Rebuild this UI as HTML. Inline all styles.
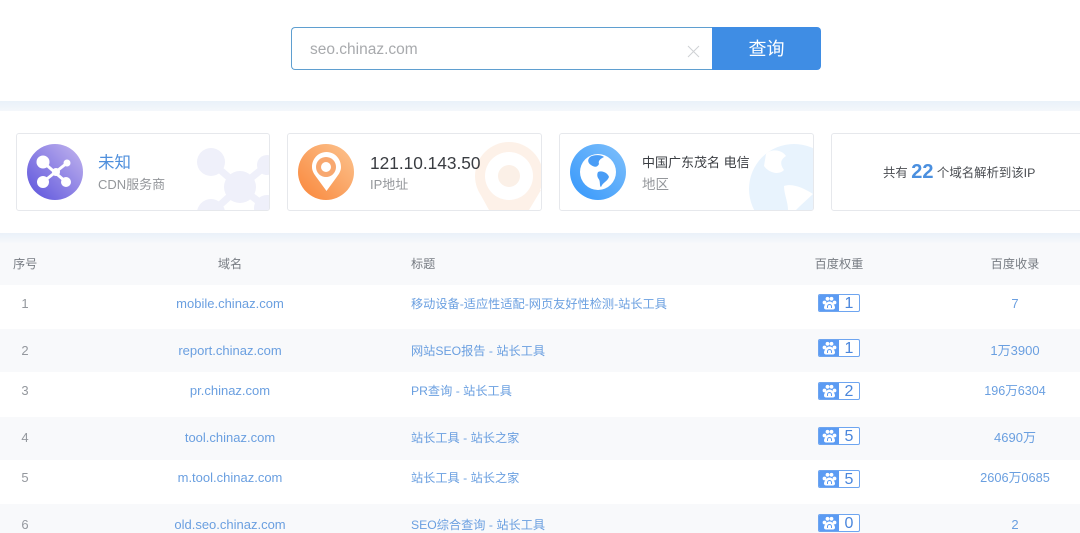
<!DOCTYPE html>
<html><head><meta charset="utf-8"><style>
html,body{margin:0;padding:0;width:1080px;height:533px;overflow:hidden;background:#fff;font-family:"Liberation Sans","Noto Sans CJK SC",sans-serif}
.a{position:absolute;white-space:nowrap}
#p{position:relative;width:1080px;height:533px;overflow:hidden}
.card{position:absolute;top:133px;height:76px;background:#fff;border:1px solid #e6e8ec;border-radius:3px;overflow:hidden}
.c{transform:translateX(-50%);font-size:13px;line-height:18px}
.l{color:#6a9fe0}.n{color:#94989e}.h{color:#777c83;font-size:12.2px}
.t{font-size:12.2px;line-height:18px;color:#6a9fe0}
.band{position:absolute;left:0;width:1080px;background:#f8f9fb}
.b{position:absolute;left:818px;width:40px;height:16px;border:1px solid #6ea5f0;border-radius:2px;background:#fff;overflow:hidden}
.b svg{position:absolute;left:0;top:0}
.b i{position:absolute;left:0;top:0;width:20px;height:16px;background:#5b9bf3}
.b b{position:absolute;left:20px;width:20px;top:0;text-align:center;font:400 16px/18px "Liberation Sans",sans-serif;color:#4a86dc}
</style></head><body><div id="p">
<div class="a" style="left:291px;top:27px;width:422px;height:41px;border:1px solid #5f9fd0;border-radius:4px 0 0 4px;border-right:0"></div>
<div class="a" style="left:310px;top:40px;font-size:15.5px;line-height:20px;color:#a8aaad">seo.chinaz.com</div>
<svg class="a" style="left:687px;top:45px" width="13" height="13"><path d="M1 1L12 12M12 1L1 12" stroke="#cfd1d4" stroke-width="1"/></svg>
<div class="a" style="left:712px;top:27px;width:109px;height:43px;background:#3f8de4;border-radius:0 4px 4px 0;color:#fff;font-size:18px;line-height:44px;text-align:center">查询</div>
<div class="a" style="left:0;top:101px;width:1080px;height:10px;background:linear-gradient(#e9f1f9,#f4f7fb)"></div>
<div class="a" style="left:0;top:233px;width:1080px;height:10px;background:linear-gradient(#eaf1f9,#f6f8fb)"></div>

<div class="card" style="left:16px;width:252px">
<svg class="a" style="left:0;top:0" width="252" height="76"><g fill="#eff0fa"><circle cx="194" cy="28" r="14"/><circle cx="223" cy="53" r="16"/><circle cx="250" cy="31" r="10"/><circle cx="194" cy="79" r="14"/><circle cx="250" cy="74" r="13"/><path d="M194 28L223 53L250 31M223 53L194 79M223 53L250 74" stroke="#eff0fa" stroke-width="7" fill="none"/></g></svg>
</div>
<svg class="a" style="left:27px;top:144px" width="56" height="56"><defs><linearGradient id="g1" x1="0" y1="1" x2="1" y2="0"><stop offset="0" stop-color="#5a52dc"/><stop offset="1" stop-color="#c4b6ee"/></linearGradient></defs><circle cx="28" cy="28" r="28" fill="url(#g1)"/><g fill="#fff"><circle cx="16" cy="18" r="6.5"/><circle cx="40" cy="19" r="3.5"/><circle cx="16" cy="38" r="6"/><circle cx="39" cy="38" r="5"/><circle cx="29" cy="28" r="4"/></g><path d="M16 18L39 38M40 19L16 38" stroke="#fff" stroke-width="3"/></svg>
<div class="a" style="left:98px;top:153px;font-size:16.5px;line-height:21px;color:#4f8fdc">未知</div>
<div class="a" style="left:98px;top:176px;font-size:13px;line-height:18px;color:#94979b">CDN服务商</div>

<div class="card" style="left:287px;width:253px">
<svg class="a" style="left:0;top:0" width="253" height="76"><circle cx="221" cy="42" r="34" fill="#fdf1e8"/><path d="M190 56L253 56L241 76L201 76Z" fill="#fdf1e8"/><circle cx="221" cy="42" r="24" fill="#fff"/><circle cx="221" cy="42" r="11" fill="#fbf0e7"/></svg>
</div>
<svg class="a" style="left:298px;top:144px" width="56" height="56"><defs><linearGradient id="g2" x1="0" y1="1" x2="1" y2="0"><stop offset="0" stop-color="#f9863a"/><stop offset="1" stop-color="#fcc490"/></linearGradient></defs><circle cx="28" cy="28" r="28" fill="url(#g2)"/><path d="M28.5 8C20 8 14 15 14 23C14 27 16 30 19 34L28.5 47L38 34C41 30 43 27 43 23C43 15 37 8 28.5 8Z" fill="#fff"/><circle cx="28" cy="23" r="10" fill="#f8a870"/><circle cx="28" cy="23" r="5" fill="#fff"/></svg>
<div class="a" style="left:370px;top:152px;font-size:17.3px;line-height:22px;color:#3a3d42">121.10.143.50</div>
<div class="a" style="left:370px;top:176px;font-size:13px;line-height:18px;color:#94979b">IP地址</div>

<div class="card" style="left:559px;width:253px">
<svg class="a" style="left:0;top:0" width="253" height="76"><circle cx="234" cy="55" r="45" fill="#e8f3fd"/><path d="M206 20C212 14 222 16 226 22C220 26 220 30 224 36C218 42 208 38 204 32ZM224 52C232 49 244 54 253 60L240 72L236 76L228 76C228 68 224 60 224 52Z" fill="#fff"/></svg>
</div>
<svg class="a" style="left:570px;top:144px" width="56" height="56"><defs><linearGradient id="g3" x1="0" y1="1" x2="1" y2="0"><stop offset="0" stop-color="#3597fb"/><stop offset="1" stop-color="#7fc0fb"/></linearGradient></defs><circle cx="28" cy="28" r="28" fill="url(#g3)"/><circle cx="28" cy="28" r="18" fill="#fff"/><path d="M20 13C24 10 32 11 34 13C30 15 28 17 29 20C27 24 24 23 21 21C18 19 17 16 20 13ZM28 28C32 26 38 29 39 33C37 38 33 38 31 43C29 42 31 37 28 34C27 32 27 30 28 28Z" fill="#4a9df6"/></svg>
<div class="a" style="left:642px;top:153px;font-size:13px;line-height:20px;color:#3a3d42">中国广东茂名 电信</div>
<div class="a" style="left:642px;top:176px;font-size:13.5px;line-height:18px;color:#94979b">地区</div>

<div class="card" style="left:831px;width:260px"></div>
<div class="a" style="left:883px;top:160px;font-size:12.4px;line-height:24px;color:#4a4d52">共有 <span style="font-size:20px;font-weight:700;color:#4a8fdf;vertical-align:-1px">22</span> 个域名解析到该IP</div>

<div class="band" style="top:243px;height:42px"></div>
<div class="band" style="top:329px;height:43px"></div>
<div class="band" style="top:417px;height:43px"></div>
<div class="band" style="top:504px;height:29px"></div>

<div class="a h" style="left:13px;top:255px;line-height:18px">序号</div>
<div class="a c h" style="left:230px;top:255px">域名</div>
<div class="a h" style="left:411px;top:255px;line-height:18px">标题</div>
<div class="a c h" style="left:839px;top:255px">百度权重</div>
<div class="a c h" style="left:1015px;top:255px">百度收录</div>

<div class="a c n" style="left:25px;top:295px">1</div><div class="a c l" style="left:230px;top:295px">mobile.chinaz.com</div><div class="a t" style="left:411px;top:295px">移动设备-适应性适配-网页友好性检测-站长工具</div><div class="a c l" style="left:1015px;top:295px">7</div>
<div class="a c n" style="left:25px;top:342px">2</div><div class="a c l" style="left:230px;top:342px">report.chinaz.com</div><div class="a t" style="left:411px;top:342px">网站SEO报告 - 站长工具</div><div class="a c l" style="left:1015px;top:342px">1万3900</div>
<div class="a c n" style="left:25px;top:382px">3</div><div class="a c l" style="left:230px;top:382px">pr.chinaz.com</div><div class="a t" style="left:411px;top:382px">PR查询 - 站长工具</div><div class="a c l" style="left:1015px;top:382px;font-size:12.6px">196万6304</div>
<div class="a c n" style="left:25px;top:429px">4</div><div class="a c l" style="left:230px;top:429px">tool.chinaz.com</div><div class="a t" style="left:411px;top:429px">站长工具 - 站长之家</div><div class="a c l" style="left:1015px;top:429px">4690万</div>
<div class="a c n" style="left:25px;top:469px">5</div><div class="a c l" style="left:230px;top:469px">m.tool.chinaz.com</div><div class="a t" style="left:411px;top:469px">站长工具 - 站长之家</div><div class="a c l" style="left:1015px;top:469px;font-size:12.8px">2606万0685</div>
<div class="a c n" style="left:25px;top:516px">6</div><div class="a c l" style="left:230px;top:516px">old.seo.chinaz.com</div><div class="a t" style="left:411px;top:516px">SEO综合查询 - 站长工具</div><div class="a c l" style="left:1015px;top:516px">2</div>

<div class="b" style="top:294px"><i></i><svg width="20" height="16"><g fill="#fff"><circle cx="5.5" cy="7.5" r="1.9"/><circle cx="8.5" cy="3.8" r="1.9"/><circle cx="12.5" cy="3.8" r="1.9"/><circle cx="15.5" cy="7.5" r="1.9"/><path d="M10.5 6.5C13.5 6.5 16 10.5 16 12.5C16 15 13 14.5 10.5 14.5C8 14.5 5 15 5 12.5C5 10.5 7.5 6.5 10.5 6.5Z"/></g><path d="M8.5 13V11.5A2 2 0 0 1 12.5 11.5V13" fill="none" stroke="#5b9bf3" stroke-width="1"/></svg><b>1</b></div>
<div class="b" style="top:339px"><i></i><svg width="20" height="16"><g fill="#fff"><circle cx="5.5" cy="7.5" r="1.9"/><circle cx="8.5" cy="3.8" r="1.9"/><circle cx="12.5" cy="3.8" r="1.9"/><circle cx="15.5" cy="7.5" r="1.9"/><path d="M10.5 6.5C13.5 6.5 16 10.5 16 12.5C16 15 13 14.5 10.5 14.5C8 14.5 5 15 5 12.5C5 10.5 7.5 6.5 10.5 6.5Z"/></g><path d="M8.5 13V11.5A2 2 0 0 1 12.5 11.5V13" fill="none" stroke="#5b9bf3" stroke-width="1"/></svg><b>1</b></div>
<div class="b" style="top:382px"><i></i><svg width="20" height="16"><g fill="#fff"><circle cx="5.5" cy="7.5" r="1.9"/><circle cx="8.5" cy="3.8" r="1.9"/><circle cx="12.5" cy="3.8" r="1.9"/><circle cx="15.5" cy="7.5" r="1.9"/><path d="M10.5 6.5C13.5 6.5 16 10.5 16 12.5C16 15 13 14.5 10.5 14.5C8 14.5 5 15 5 12.5C5 10.5 7.5 6.5 10.5 6.5Z"/></g><path d="M8.5 13V11.5A2 2 0 0 1 12.5 11.5V13" fill="none" stroke="#5b9bf3" stroke-width="1"/></svg><b>2</b></div>
<div class="b" style="top:427px"><i></i><svg width="20" height="16"><g fill="#fff"><circle cx="5.5" cy="7.5" r="1.9"/><circle cx="8.5" cy="3.8" r="1.9"/><circle cx="12.5" cy="3.8" r="1.9"/><circle cx="15.5" cy="7.5" r="1.9"/><path d="M10.5 6.5C13.5 6.5 16 10.5 16 12.5C16 15 13 14.5 10.5 14.5C8 14.5 5 15 5 12.5C5 10.5 7.5 6.5 10.5 6.5Z"/></g><path d="M8.5 13V11.5A2 2 0 0 1 12.5 11.5V13" fill="none" stroke="#5b9bf3" stroke-width="1"/></svg><b>5</b></div>
<div class="b" style="top:470px"><i></i><svg width="20" height="16"><g fill="#fff"><circle cx="5.5" cy="7.5" r="1.9"/><circle cx="8.5" cy="3.8" r="1.9"/><circle cx="12.5" cy="3.8" r="1.9"/><circle cx="15.5" cy="7.5" r="1.9"/><path d="M10.5 6.5C13.5 6.5 16 10.5 16 12.5C16 15 13 14.5 10.5 14.5C8 14.5 5 15 5 12.5C5 10.5 7.5 6.5 10.5 6.5Z"/></g><path d="M8.5 13V11.5A2 2 0 0 1 12.5 11.5V13" fill="none" stroke="#5b9bf3" stroke-width="1"/></svg><b>5</b></div>
<div class="b" style="top:514px"><i></i><svg width="20" height="16"><g fill="#fff"><circle cx="5.5" cy="7.5" r="1.9"/><circle cx="8.5" cy="3.8" r="1.9"/><circle cx="12.5" cy="3.8" r="1.9"/><circle cx="15.5" cy="7.5" r="1.9"/><path d="M10.5 6.5C13.5 6.5 16 10.5 16 12.5C16 15 13 14.5 10.5 14.5C8 14.5 5 15 5 12.5C5 10.5 7.5 6.5 10.5 6.5Z"/></g><path d="M8.5 13V11.5A2 2 0 0 1 12.5 11.5V13" fill="none" stroke="#5b9bf3" stroke-width="1"/></svg><b>0</b></div>
</div></body></html>
